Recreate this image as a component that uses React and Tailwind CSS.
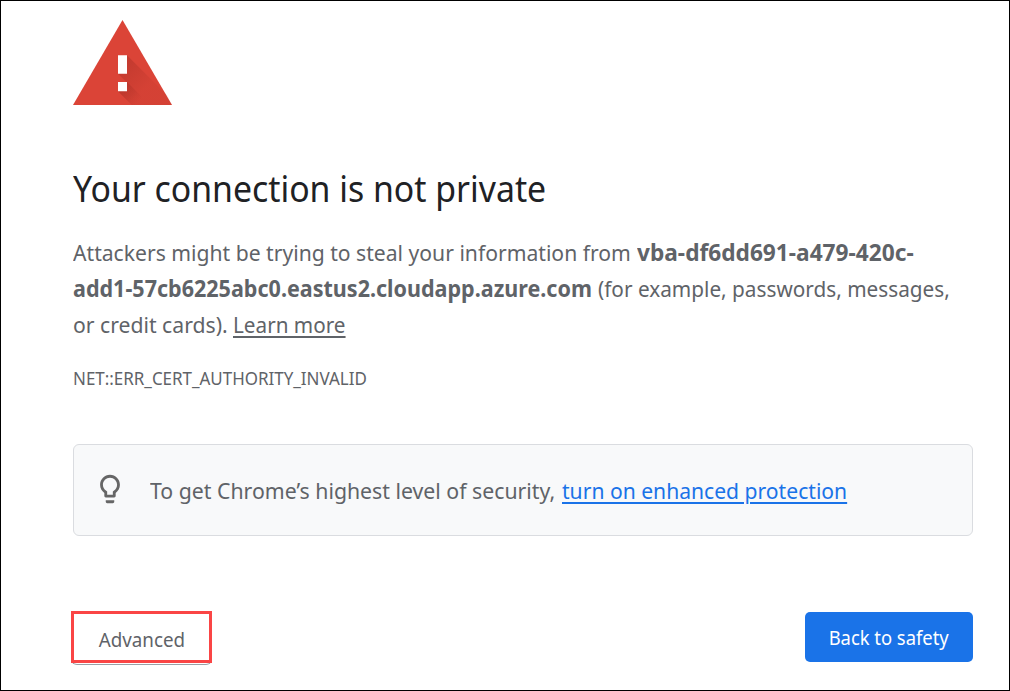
function Run({ className, children }) {
  return <span className={`inline-block whitespace-nowrap ${className}`}>{children}</span>;
}

export default function App() {
  return (
    <main className="h-[691px] w-[1010px] overflow-hidden border border-black bg-white pl-[72px] pr-9 pt-[19px] font-['Noto_Sans',sans-serif] font-[370] text-[#5f6368]">
      <svg className="block h-[85px] w-[99px]" viewBox="0 0 99 85">
        <defs>
          <linearGradient id="shade" gradientUnits="userSpaceOnUse" x1="48" y1="44" x2="72" y2="68">
            <stop offset="0" stopColor="#a52e25" stopOpacity=".45" />
            <stop offset="1" stopColor="#a52e25" stopOpacity=".12" />
          </linearGradient>
          <linearGradient id="dotShade" gradientUnits="userSpaceOnUse" x1="48" y1="65" x2="65" y2="82">
            <stop offset="0" stopColor="#a52e25" stopOpacity=".5" />
            <stop offset="1" stopColor="#a52e25" stopOpacity="0" />
          </linearGradient>
        </defs>
        <path d="M49.5 0 99 85H0Z" fill="#db4437" />
        <path d="M54 35.3 94 75.3 99 85H58.7L45 71.3V62H53.3L45 53.7Z" fill="url(#shade)" />
        <path d="M54 62 77 85H58.7L45 71.3Z" fill="url(#dotShade)" />
        <path d="M45 35.3h9v18.4h-9zM45 62h9v9.3h-9z" fill="white" />
      </svg>
      <h1 className="mt-[60px] h-[46px] text-[35.5px] leading-[46px] text-[#202124]">
        <Run className="origin-left scale-x-[.952]">Your connection is not private</Run>
      </h1>
      <div className="mt-[24px] text-[22.5px] leading-9">
        <p className="flex h-9">
          <Run className="w-[563.5px] origin-left scale-x-[.939]">Attackers might be trying to steal your information from</Run>
          <Run className="origin-left scale-x-[1.008] font-bold">vba-df6dd691-a479-420c-</Run>
        </p>
        <p className="flex h-9">
          <Run className="w-[525px] origin-left scale-x-[.957] font-bold">add1-57cb6225abc0.eastus2.cloudapp.azure.com</Run>
          <Run className="origin-left scale-x-[.923]">(for example, passwords, messages,</Run>
        </p>
        <p className="flex h-9">
          <Run className="w-[160px] origin-left scale-x-[.941]">or credit cards).</Run>
          <Run className="origin-left scale-x-[.92]"><a className="underline decoration-2 underline-offset-[3px]">Learn more</a></Run>
        </p>
      </div>
      <p className="mt-[23px] h-6 text-[18px] leading-6"><Run className="origin-left scale-x-[.942]">NET::ERR_CERT_AUTHORITY_INVALID</Run></p>
      <section className="mt-[54px] flex h-[92px] items-center rounded-[6px] border border-[#dadce0] bg-[#f8f9fa] pl-[19px] text-[22.5px]">
        <svg className="mb-0.5 size-[34px] shrink-0 fill-[#666]" viewBox="0 0 24 24">
          <path d="M9 21c0 .55.45 1 1 1h4c.55 0 1-.45 1-1v-1H9v1zm3-19C8.14 2 5 5.14 5 9c0 2.38 1.19 4.47 3 5.74V17c0 .55.45 1 1 1h6c.55 0 1-.45 1-1v-2.26c1.81-1.27 3-3.36 3-5.74 0-3.86-3.14-7-7-7zm2.85 11.1-.85.6V16h-4v-2.3l-.85-.6C7.8 12.16 7 10.63 7 9c0-2.76 2.24-5 5-5s5 2.24 5 5c0 1.63-.8 3.16-2.15 4.1z" />
        </svg>
        <p className="ml-[23px] flex pt-0.5">
          <Run className="w-[411.5px] origin-left scale-x-[.945]">To get Chrome’s highest level of security,</Run>
          <Run className="origin-left scale-x-[.938]"><a className="text-[#1a73e8] underline decoration-2 underline-offset-[3px]">turn on enhanced protection</a></Run>
        </p>
      </section>
      <div className="mt-[75px] flex items-start justify-between">
        <div className="-ml-[2px] h-[54px] w-[141px] rounded-b-[6px] border-b border-[#9aa0a6]">
          <button className="block h-[52px] w-[141px] border-[3px] border-[#fa4545] pt-1.5 text-[19.5px]">
            <Run className="scale-x-[.963]">Advanced</Run>
          </button>
        </div>
        <button className="mt-px h-[50px] w-[168px] rounded-[5px] bg-[#1a73e8] pt-0.5 text-[19.5px] text-white">
          <Run className="scale-x-[.943]">Back to safety</Run>
        </button>
      </div>
    </main>
  );
}
